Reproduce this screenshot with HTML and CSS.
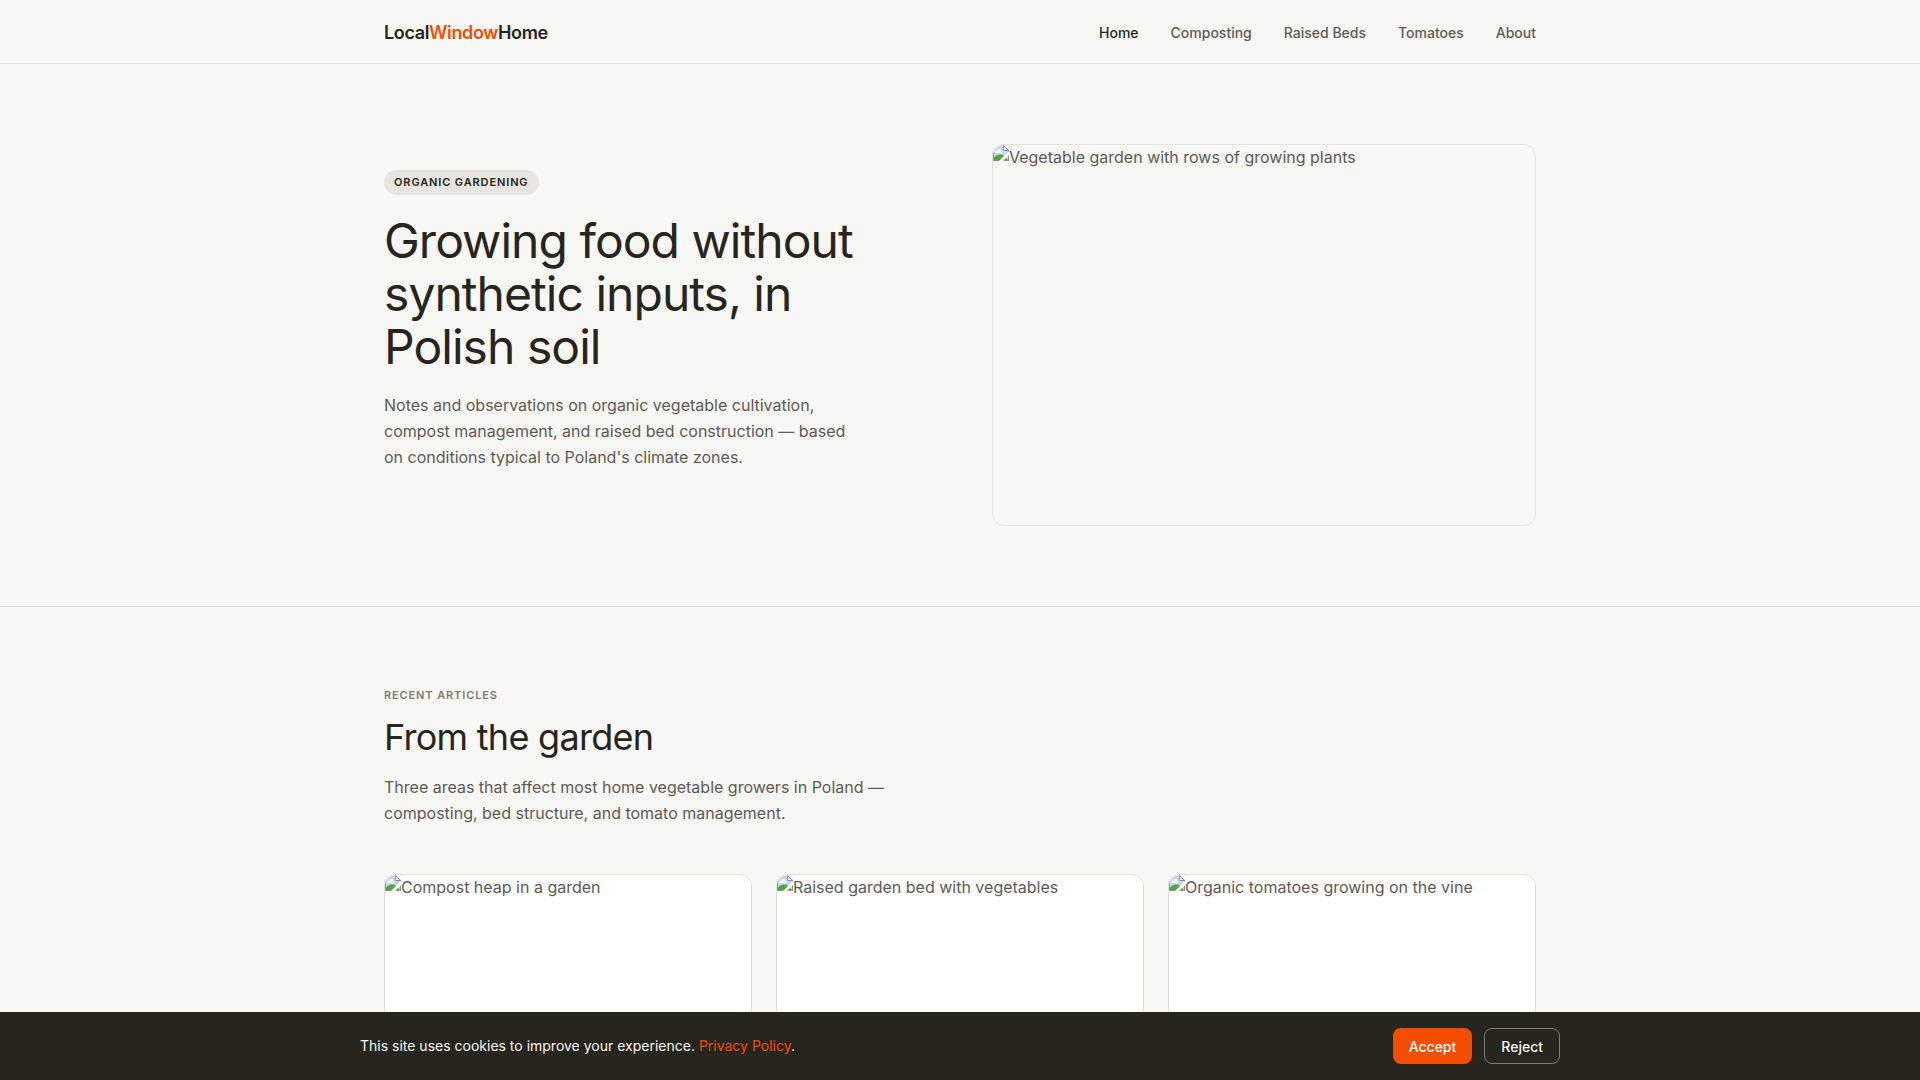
FILE: index.html
```html
<!DOCTYPE html>
<html lang="en">
<head>
    <meta charset="UTF-8">
    <meta name="viewport" content="width=device-width, initial-scale=1.0">
    <title>LocalWindowHome</title>
    <link rel="stylesheet" href="styles.css">
</head>
<body>
    <!-- shared picture placeholder icon -->
    <svg class="sprite" aria-hidden="true">
        <symbol id="picture" viewBox="0 0 16 16">
            <path d="M0 0h11l5 5v11H0z" fill="#c3d6f8"/>
            <path d="M2 8a2 2 0 0 1 2-2.500 2.500 2.500 0 0 1 4.500 0A1.500 1.500 0 0 1 9 8z" fill="#fff"/>
            <path d="M0 16v-2c2-4 8-6 11-3l5 5z" fill="#4fa83b"/>
            <path d="M.5 0v15.500h15V5" fill="none" stroke="#8f8f8f"/>
            <path d="M10.500.5v5h5z" fill="#fff" stroke="#8f8f8f"/>
            <path d="M16 6v4l-6 6H6z" fill="#fff"/>
        </symbol>
    </svg>

    <header class="header">
        <div class="container header-inner">
            <a href="#" class="logo">Local<span>Window</span>Home</a>
            <nav class="nav">
                <a href="#" class="active">Home</a>
                <a href="#">Composting</a>
                <a href="#">Raised Beds</a>
                <a href="#">Tomatoes</a>
                <a href="#">About</a>
            </nav>
        </div>
    </header>

    <main>
        <section class="hero">
            <div class="container hero-grid">
                <div class="hero-text">
                    <span class="badge">Organic Gardening</span>
                    <h1>Growing food without synthetic inputs, in Polish soil</h1>
                    <p>Notes and observations on organic vegetable cultivation, compost management, and raised bed construction — based on conditions typical to Poland's climate zones.</p>
                </div>
                <div class="picture hero-picture">
                    <svg class="icon" aria-hidden="true"><use href="#picture"/></svg>
                    <span>Vegetable garden with rows of growing plants</span>
                </div>
            </div>
        </section>

        <section class="articles">
            <div class="container">
                <p class="label">Recent Articles</p>
                <h2>From the garden</h2>
                <p class="intro">Three areas that affect most home vegetable growers in Poland — composting, bed structure, and tomato management.</p>
                <div class="cards">
                    <a href="#" class="picture card">
                        <svg class="icon" aria-hidden="true"><use href="#picture"/></svg>
                        <span>Compost heap in a garden</span>
                    </a>
                    <a href="#" class="picture card">
                        <svg class="icon" aria-hidden="true"><use href="#picture"/></svg>
                        <span>Raised garden bed with vegetables</span>
                    </a>
                    <a href="#" class="picture card">
                        <svg class="icon" aria-hidden="true"><use href="#picture"/></svg>
                        <span>Organic tomatoes growing on the vine</span>
                    </a>
                </div>
            </div>
        </section>
    </main>

    <div class="cookies">
        <div class="cookies-inner">
            <p>This site uses cookies to improve your experience. <a href="#">Privacy Policy</a>.</p>
            <div class="cookies-buttons">
                <button type="button" class="btn accept">Accept</button>
                <button type="button" class="btn reject">Reject</button>
            </div>
        </div>
    </div>
</body>
</html>
```
FILE: styles.css
```css
* {
    box-sizing: border-box;
    margin: 0;
    padding: 0;
}

body {
    font-family: Inter, sans-serif;
    font-size: 16px;
    line-height: 26px;
    color: #5c5b54;
    background-color: #f7f7f4;
}

a {
    color: inherit;
    text-decoration: none;
}

.sprite {
    display: none;
}

.container {
    max-width: 1200px;
    margin: 0 auto;
    padding: 0 24px;
}

/* Header */
.header {
    border-bottom: 1px solid #e3e3de;
}

.header-inner {
    display: flex;
    align-items: center;
    justify-content: space-between;
    padding-top: 20px;
    padding-bottom: 17px;
}

.logo {
    font-size: 18px;
    font-weight: 600;
    letter-spacing: -0.02em;
    color: #26251e;
}

.logo span {
    color: #f54e00;
}

.nav {
    display: flex;
    gap: 32px;
    font-size: 14px;
    font-weight: 500;
}

.nav .active {
    color: #26251e;
}

/* Hero */
.hero {
    padding: 80px 0;
    border-bottom: 1px solid #e3e3de;
}

.hero-grid {
    display: grid;
    grid-template-columns: 1fr 1fr;
    gap: 64px;
    align-items: center;
}

.hero-text p {
    max-width: 480px;
    margin-bottom: 30px;
}

.badge {
    display: block;
    width: fit-content;
    padding: 4px 10px;
    margin-bottom: 19px;
    border-radius: 20px;
    font-size: 11px;
    line-height: 17px;
    font-weight: 600;
    letter-spacing: 0.08em;
    text-transform: uppercase;
    color: #26251e;
    background-color: #e6e5e0;
}

h1 {
    margin-bottom: 19px;
    font-size: 48px;
    line-height: 53px;
    font-weight: 400;
    letter-spacing: -0.02em;
    color: #26251e;
}

.picture {
    display: flex;
    align-items: flex-start;
    border: 1px solid #e3e3de;
    border-radius: 12px;
    line-height: 24px;
    overflow: hidden;
}

.hero-picture {
    height: 382px;
}

.icon {
    flex: none;
    width: 16px;
    height: 16px;
}

/* Articles */
.articles {
    padding: 80px 0;
}

.label {
    margin-bottom: 12px;
    font-size: 11px;
    line-height: 17px;
    font-weight: 600;
    letter-spacing: 0.08em;
    text-transform: uppercase;
    color: #807d72;
}

h2 {
    margin-bottom: 15px;
    font-size: 36px;
    line-height: 43px;
    font-weight: 400;
    letter-spacing: -0.02em;
    color: #26251e;
}

.intro {
    max-width: 520px;
    margin-bottom: 48px;
}

.cards {
    display: grid;
    grid-template-columns: repeat(3, 1fr);
    gap: 24px;
}

.card {
    height: 380px;
    background-color: #fff;
}

/* Cookie bar */
.cookies {
    position: fixed;
    left: 0;
    right: 0;
    bottom: 0;
    padding: 16px 24px;
    background-color: #26251e;
}

.cookies-inner {
    display: flex;
    align-items: center;
    justify-content: space-between;
    max-width: 1200px;
    margin: 0 auto;
    font-size: 14px;
    color: #f7f7f4;
}

.cookies a {
    color: #f54e00;
}

.cookies-buttons {
    display: flex;
    gap: 12px;
}

.btn {
    height: 36px;
    padding: 0 16px;
    border: none;
    border-radius: 8px;
    font-family: inherit;
    font-size: 14px;
    font-weight: 500;
    cursor: pointer;
}

.accept {
    color: #fff;
    background-color: #f54e00;
}

.reject {
    color: #f7f7f4;
    border: 1px solid #807d72;
    background-color: transparent;
}
```
